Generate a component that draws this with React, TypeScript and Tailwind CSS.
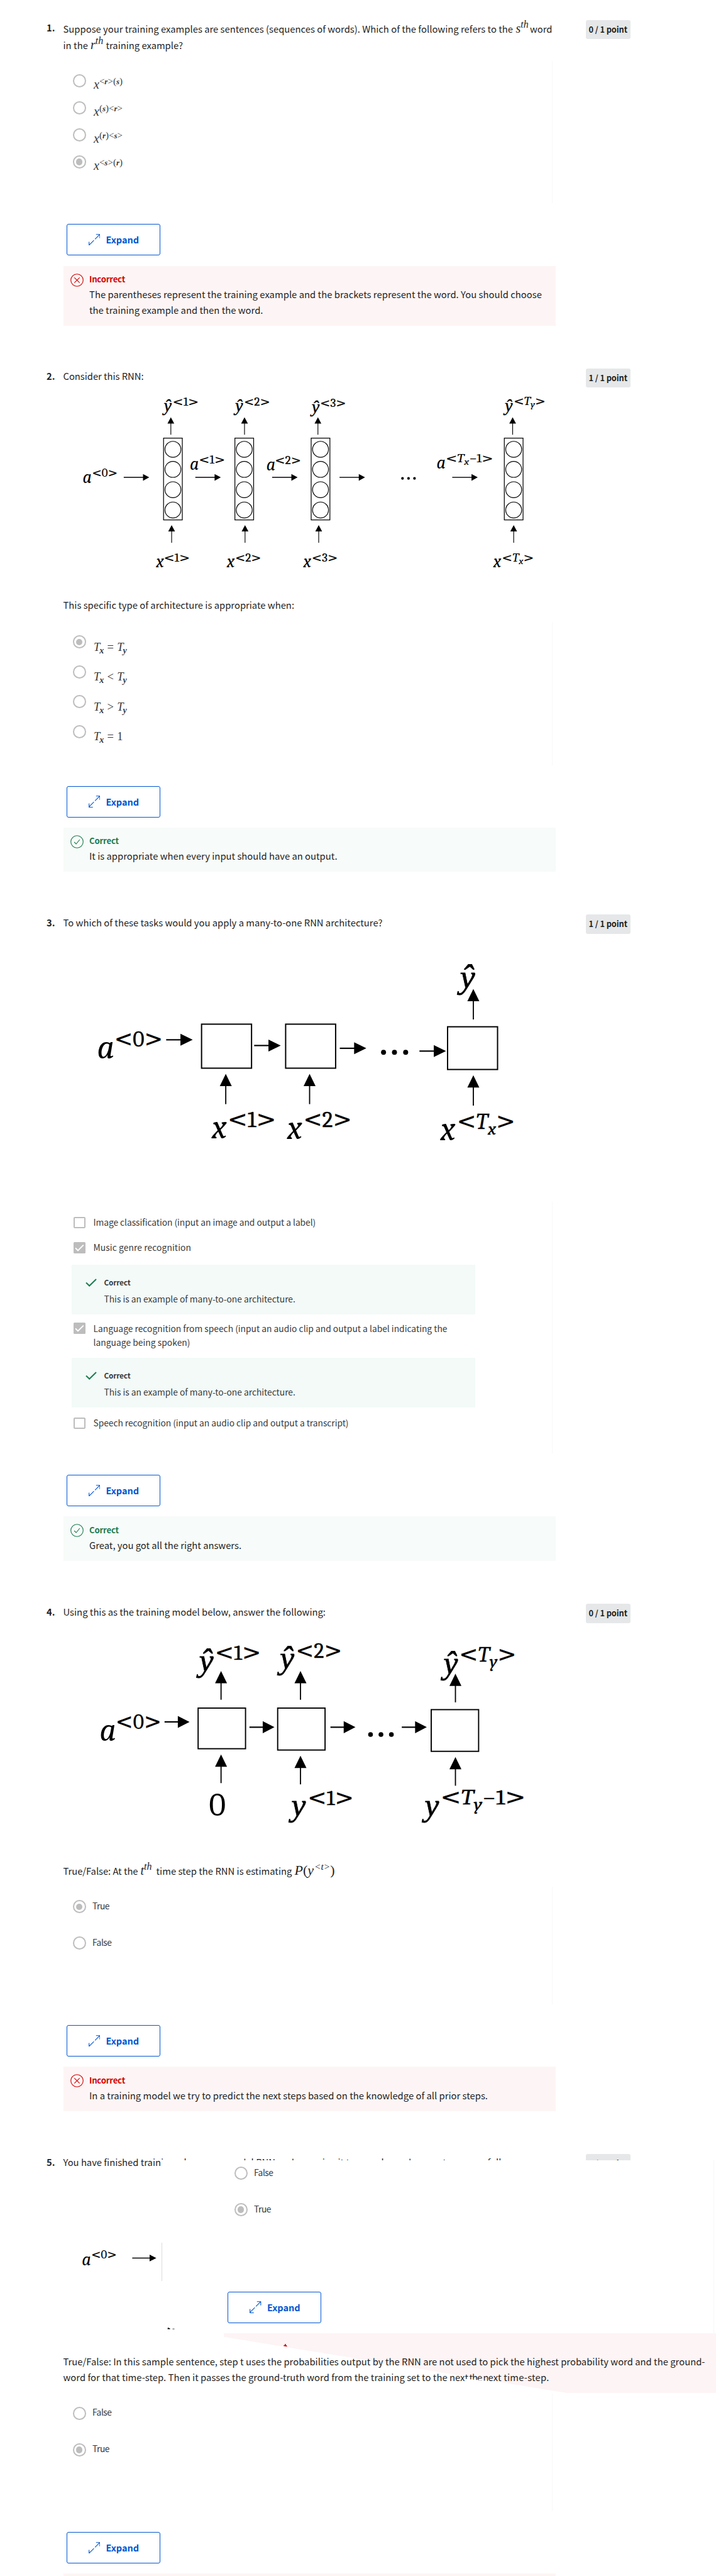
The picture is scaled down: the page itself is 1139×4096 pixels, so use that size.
import { useLayoutEffect, useRef } from "react";
import type { ReactNode } from "react";

/** One line of text whose letter spacing is adjusted so that it fills a measure. */
function Line({ w, className = "", children }: { w: number; className?: string; children: string }) {
  const ref = useRef<HTMLSpanElement>(null);
  useLayoutEffect(() => {
    const el = ref.current;
    if (!el) return;
    el.style.letterSpacing = "0px";
    const natural = el.getBoundingClientRect().width;
    el.style.letterSpacing = `${(w - natural) / children.length}px`;
  }, [w, children]);
  return (
    <span ref={ref} className={"inline-block whitespace-pre " + className}>
      {children}
    </span>
  );
}

const SERIF = "font-['Liberation_Serif',serif]";

/* ---------- controls ---------- */

function Radio({ on = false }: { on?: boolean }) {
  return (
    <span className="flex size-[21px] shrink-0 items-center justify-center rounded-full border-2 border-[#bdbdbd]">
      {on && <span className="size-[10.5px] rounded-full bg-[#bdbdbd]" />}
    </span>
  );
}

function Checkbox({ on = false }: { on?: boolean }) {
  return on ? (
    <svg viewBox="0 0 19 18" className="mt-[2.5px] h-[18px] w-[19px] shrink-0">
      <rect width="19" height="18" rx="1.5" fill="#bdbdbd" />
      <path d="M3 9.4 7 13.4 15.8 4.6" fill="none" stroke="#fff" strokeWidth="2" />
    </svg>
  ) : (
    <span className="mt-[2.5px] h-[18px] w-[19px] shrink-0 rounded-[2px] border-2 border-[#bdbdbd]" />
  );
}

function Expand({ className = "" }: { className?: string }) {
  return (
    <button
      className={
        "flex h-[50px] w-[149px] shrink-0 items-center rounded-[3px] border border-[#0056d2] bg-white pl-[34px] text-[#0056d2] " +
        className
      }
    >
      <svg viewBox="0 0 22 22" className="size-[18.5px]" fill="none" stroke="#0056d2" strokeWidth="1.3">
        <path d="M14 .8h7.2V8M21 1 12 10M8 22H.8v-7.2M1 21l9-9" />
      </svg>
      <Line w={52.5} className="ml-[9.5px] text-[14.5px] font-bold">
        Expand
      </Line>
    </button>
  );
}

function Feedback({
  ok,
  className,
  children,
}: {
  ok: boolean;
  className: string;
  children: ReactNode;
}) {
  return (
    <div className={"flex w-[783px] shrink-0 pl-[11.5px] " + (ok ? "bg-[#f7fbf9] " : "bg-[#fdf5f5] ") + className}>
      <svg
        viewBox="0 0 24 24"
        className="mt-[12px] size-[21px] shrink-0"
        fill="none"
        stroke={ok ? "#1d7c50" : "#d30001"}
        strokeWidth="1.3"
      >
        <circle cx="12" cy="12" r="11.2" />
        <path d={ok ? "M7 12.6 10.4 16 17 8" : "M7.2 7.2 16.8 16.8M16.8 7.2 7.2 16.8"} />
      </svg>
      <div className="ml-[9px] flex flex-col items-start pt-[10.5px] text-[14.8px] leading-[25px] text-[#1f1f1f]">
        <Line
          w={ok ? 47 : 57}
          className={"text-[13.2px] leading-[22px] font-bold " + (ok ? "text-[#1d7c50]" : "text-[#d30001]")}
        >
          {ok ? "Correct" : "Incorrect"}
        </Line>
        {children}
      </div>
    </div>
  );
}

function Question({
  n,
  points,
  className,
  children,
}: {
  n: number;
  points: string;
  className: string;
  children: ReactNode;
}) {
  return (
    <section className={"flex shrink-0 items-start pl-[74px] " + className}>
      <div className="w-[26.5px] shrink-0 text-[14.8px] leading-[25.5px] font-bold text-[#1f1f1f]">{n}.</div>
      <div className="flex w-[783px] shrink-0 flex-col items-start text-[14.8px] leading-[25.5px] text-[#1f1f1f]">
        {children}
      </div>
      <div className="mt-[0.5px] ml-[48.5px] flex h-[30.5px] w-[70.5px] shrink-0 items-center justify-center rounded-[3px] bg-[#e5e7e8] text-[12.8px] leading-[20px] font-bold text-[#1f1f1f]">
        <Line w={61.5}>{points}</Line>
      </div>
    </section>
  );
}

function Panel({ className, children }: { className: string; children: ReactNode }) {
  return (
    <div className={"flex w-[778px] shrink-0 flex-col border-r border-[#f7f7f7] pl-[15px] text-[#373a3c] " + className}>
      {children}
    </div>
  );
}

function TrueFalse({ value, on }: { value: "True" | "False"; on?: boolean }) {
  return (
    <div className="flex h-[58px] items-center">
      <Radio on={on} />
      <Line w={value === "True" ? 27 : 30.5} className="-mt-[3px] ml-[10.5px] text-[13.8px]">
        {value}
      </Line>
    </div>
  );
}

/* ---------- inline maths ---------- */

function PowerTh({ base, className }: { base: string; className: string }) {
  return (
    <span className={"inline-block leading-none whitespace-nowrap italic " + SERIF + " " + className}>
      <span className="text-[20px]">{base}</span>
      <span className="inline-block align-[8px] text-[16px] leading-none">th</span>
    </span>
  );
}

function WordOption({ parts, on }: { parts: string; on?: boolean }) {
  return (
    <div className="flex h-[43px] items-center">
      <Radio on={on} />
      <span className={"mt-[10px] ml-[12.5px] leading-[18px] " + SERIF}>
        <span className="text-[20px] italic">x</span>
        <span className="inline-block align-[7px] leading-none">
          {parts.split("").map((c, i) => (
            <span key={i} className={/[rs]/.test(c) ? "text-[13px] font-bold italic" : "text-[15px]"}>
              {c}
            </span>
          ))}
        </span>
      </span>
    </div>
  );
}

function LengthOption({ rel, right, on }: { rel: string; right: ReactNode; on?: boolean }) {
  return (
    <div className="flex h-[47.5px] items-center">
      <Radio on={on} />
      <span className={"mt-[18px] ml-[12.5px] flex items-baseline text-[18.5px] leading-[18px] " + SERIF}>
        <Var sub="x" />
        <span className="mx-[4px] w-[13px] text-center">{rel}</span>
        {right}
      </span>
    </div>
  );
}

function Var({ sub }: { sub: string }) {
  return (
    <span className="italic">
      T<span className="relative top-[4px] -ml-px text-[14px] font-bold">{sub}</span>
    </span>
  );
}

/* ---------- network diagrams (viewBox units) ---------- */

function Up({ x, tip, tail, hw = 11.5, hh = 23.5, sw = 2.2 }: { x: number; tip: number; tail: number; hw?: number; hh?: number; sw?: number }) {
  return (
    <g>
      <path d={`M${x} ${tail}V${tip + hh - 1}`} stroke="#000" strokeWidth={sw} />
      <path d={`M${x} ${tip}l${hw} ${hh}h${-2 * hw}z`} />
    </g>
  );
}

function Right({ x, y, w, hw = 11.5, hl = 23.5, sw = 2.6 }: { x: number; y: number; w: number; hw?: number; hl?: number; sw?: number }) {
  return (
    <g>
      <path d={`M${x} ${y}h${w - hl + 1}`} stroke="#000" strokeWidth={sw} />
      <path d={`M${x + w} ${y}l${-hl} ${hw}v${-2 * hw}z`} />
    </g>
  );
}

function Dots({ xs, y, r }: { xs: number[]; y: number; r: number }) {
  return (
    <g>
      {xs.map((x) => (
        <circle key={x} cx={x} cy={y} r={r} />
      ))}
    </g>
  );
}

const SYMBOL = "Caladea, 'Liberation Serif', serif";

/** A letter with an angle-bracketed superscript such as a<0> or y<Ty-1>. */
function Label({
  x,
  y,
  base,
  fs,
  sx,
  sy,
  sw,
  idx,
  sub,
  rest = "",
}: {
  x: number;
  y: number;
  base: string;
  fs: number;
  sx?: number;
  sy?: number;
  sw?: number;
  idx?: string;
  sub?: string;
  rest?: string;
}) {
  const s = fs * 0.645;
  const tailed = base === "y" || base === "ŷ";
  return (
    <g stroke="#000">
      <text
        x={x}
        y={y}
        fontSize={fs}
        fontFamily={tailed ? "Liberation Serif" : SYMBOL}
        fontStyle={base === "0" ? "normal" : "italic"}
        strokeWidth={tailed ? fs * 0.016 : 0}
      >
        {base}
      </text>
      {sx !== undefined && sw !== undefined && (
        <text
          x={sx - s * 0.1}
          y={sy}
          fontSize={s}
          fontFamily={SYMBOL}
          strokeWidth={s * 0.01}
          textLength={sw + s * 0.2}
          lengthAdjust="spacingAndGlyphs"
        >
          <tspan fontFamily="DejaVu Sans">&lt;</tspan>
          <tspan fontStyle={sub ? "italic" : "normal"}>{idx}</tspan>
          {sub && (
            <tspan fontStyle="italic" fontSize={s * 0.8} dy={s * 0.26}>
              {sub}
            </tspan>
          )}
          {rest && <tspan dy={sub ? -s * 0.26 : 0}>{rest}</tspan>}
          <tspan fontFamily="DejaVu Sans" dy={sub && !rest ? -s * 0.26 : 0}>
            &gt;
          </tspan>
        </text>
      )}
    </g>
  );
}

function ManyToMany() {
  const f = 34;
  return (
    <svg viewBox="121.5 740 945 390" className="mt-[2.5px] h-[323px] w-[783px] shrink-0">
      {[313.5, 450.5, 597, 968].map((x) => (
        <g key={x} fill="none" stroke="#000">
          <rect x={x} y="841" width="36" height="157" strokeWidth="1.5" />
          {[862.5, 901, 940, 979].map((cy) => (
            <circle key={cy} cx={x + 18} cy={cy} r="15.3" strokeWidth="1.4" />
          ))}
        </g>
      ))}
      {[327.5, 469, 610, 984].map((x) => (
        <Up key={x} x={x} tip={801} tail={834.5} hw={6.5} hh={12} sw={1.4} />
      ))}
      {[329, 470, 611.5, 986].map((x) => (
        <Up key={x} x={x} tip={1008} tail={1042} hw={6.5} hh={12} sw={1.4} />
      ))}
      {[237, 374.5, 522, 651.5, 868].map((x) => (
        <Right key={x} x={x} y={916.3} w={49} hw={6.5} hl={12} sw={1.7} />
      ))}
      <Dots xs={[772.5, 784, 795.5]} y={918.3} r={2.6} />
      <Label x={314} y={790} base="ŷ" fs={f} sx={333} sy={779} sw={46} idx="1" />
      <Label x={451} y={790} base="ŷ" fs={f} sx={470} sy={779} sw={46} idx="2" />
      <Label x={598} y={792} base="ŷ" fs={f} sx={616} sy={781} sw={46} idx="3" />
      <Label x={969} y={790} base="ŷ" fs={f} sx={988} sy={777} sw={57} idx="T" sub="y" />
      <Label x={158} y={927} base="a" fs={f} sx={178} sy={915} sw={45} idx="0" />
      <Label x={364} y={901.5} base="a" fs={f} sx={383.5} sy={889.5} sw={46} idx="1" />
      <Label x={511} y={903} base="a" fs={f} sx={529.5} sy={891.5} sw={46} idx="2" />
      <Label x={838} y={899} base="a" fs={f} sx={857.5} sy={887} sw={87} idx="T" sub="x" rest="−1" />
      <Label x={299} y={1089.5} base="x" fs={f} sx={316} sy={1077.5} sw={46} idx="1" />
      <Label x={435} y={1089.5} base="x" fs={f} sx={453} sy={1077.5} sw={46} idx="2" />
      <Label x={582} y={1089.5} base="x" fs={f} sx={600} sy={1077.5} sw={46} idx="3" />
      <Label x={947} y={1089.5} base="x" fs={f} sx={965.5} sy={1077.5} sw={57} idx="T" sub="x" />
    </svg>
  );
}

function ManyToOne() {
  const f = 65;
  return (
    <svg viewBox="121.5 1800 945 460" className="mt-[12px] h-[381px] w-[783px] shrink-0">
      <g fill="none" stroke="#000" strokeWidth="2.4">
        <rect x="386.5" y="1966" width="96" height="84.5" />
        <rect x="548" y="1966" width="96" height="84.5" />
        <rect x="859" y="1971" width="96" height="82" />
      </g>
      <Right x={318.5} y={1996} w={51} />
      <Right x={487.5} y={2007} w={51} />
      <Right x={652} y={2012.3} w={51} />
      <Right x={805} y={2017.7} w={51} />
      <Dots xs={[736, 757, 778.5]} y={2020} r={4.8} />
      <Up x={433} tip={2061.5} tail={2119.5} />
      <Up x={594} tip={2061.5} tail={2119.5} />
      <Up x={908.5} tip={2064} tail={2122.5} />
      <Up x={908.5} tip={1898.5} tail={1957} />
      <Label x={883} y={1897} base="ŷ" fs={f} />
      <Label x={186} y={2032} base="a" fs={f} sx={223} sy={2008.5} sw={85} idx="0" />
      <Label x={406} y={2185} base="x" fs={f} sx={440.5} sy={2163} sw={85} idx="1" />
      <Label x={551} y={2186.5} base="x" fs={f} sx={586} sy={2164} sw={85} idx="2" />
      <Label x={845} y={2188.5} base="x" fs={f} sx={881} sy={2167} sw={104} idx="T" sub="x" />
    </svg>
  );
}

function TrainingModel() {
  const f = 62;
  return (
    <svg viewBox="121.5 3120 945 400" className="mt-[9.5px] h-[331.5px] w-[783px] shrink-0">
      <g fill="none" stroke="#000" strokeWidth="2.3">
        <rect x="380" y="3278" width="91" height="78" />
        <rect x="532.7" y="3278" width="91" height="80.5" />
        <rect x="827.5" y="3281" width="91" height="80" />
      </g>
      <Right x={315.5} y={3304.5} w={48} hl={22.5} />
      <Right x={478.5} y={3314.7} w={48} hl={22.5} />
      <Right x={634} y={3314.7} w={48} hl={22.5} />
      <Right x={771} y={3314.7} w={48} hl={22.5} />
      <Dots xs={[711, 731, 751]} y={3328.7} r={4.6} />
      <Up x={424} tip={3207} tail={3262} />
      <Up x={576.5} tip={3207} tail={3262} />
      <Up x={874} tip={3212} tail={3267} />
      <Up x={424} tip={3367} tail={3422} />
      <Up x={576.5} tip={3369.5} tail={3424.5} />
      <Up x={874} tip={3372} tail={3427} />
      <Label x={382} y={3206.5} base="ŷ" fs={f} sx={416} sy={3185.5} sw={81} idx="1" />
      <Label x={537} y={3202.5} base="ŷ" fs={f} sx={571.5} sy={3181.5} sw={81} idx="2" />
      <Label x={851} y={3211.5} base="ŷ" fs={f} sx={885} sy={3189} sw={102} idx="T" sub="y" />
      <Label x={191} y={3340.5} base="a" fs={f} sx={225.5} sy={3318} sw={80} idx="0" />
      <Label x={401} y={3485} base="0" fs={f} />
      <Label x={559} y={3485} base="y" fs={f} sx={594} sy={3464} sw={81} idx="1" />
      <Label x={815} y={3485} base="y" fs={f} sx={849} sy={3463} sw={156} idx="T" sub="y" rest="−1" />
    </svg>
  );
}

/* ---------- checkbox answers ---------- */

function Choice({ on, className, children }: { on?: boolean; className: string; children: ReactNode }) {
  return (
    <div className={"flex items-start pl-px text-[13.8px] leading-[22.3px] " + className}>
      <Checkbox on={on} />
      <div className="ml-[13px] flex flex-col items-start">{children}</div>
    </div>
  );
}

function ChoiceNote({ className }: { className: string }) {
  return (
    <div className={"-ml-[2px] flex h-[79.5px] w-[642px] shrink-0 items-start bg-[#f3faf8] pl-[22px] " + className}>
      <svg viewBox="0 0 18 13" className="mt-[22px] h-[13px] w-[18px] shrink-0" fill="none" stroke="#1d7c50" strokeWidth="2">
        <path d="M1 6.5 6.2 11.5 17 1" />
      </svg>
      <div className="ml-[12px] flex flex-col items-start pt-[17px]">
        <Line w={42} className="text-[11.8px] leading-[22px] font-bold">
          Correct
        </Line>
        <Line w={304.3} className="mt-[4px] text-[13.8px] leading-[22px]">
          This is an example of many-to-one architecture.
        </Line>
      </div>
    </div>
  );
}

/* ---------- pieces lying over the last question ---------- */

function Overlay() {
  return (
    <>
      <div className="absolute top-[3434.5px] left-[257px] h-[275px] w-[878.5px] border-r border-[#f7f7f7] bg-white text-[#373a3c]">
        <div className="flex flex-col items-start">
          <div className="-mt-[8px] pl-[115.5px]">
            <TrueFalse value="False" />
            <TrueFalse value="True" on />
          </div>
          <Expand className="mt-[101px] ml-[105px]" />
        </div>
      </div>
      <div className="absolute top-[3565.5px] left-[257px] h-[61px] w-px bg-[#dcdcdc]" />
      <svg viewBox="0 0 13 4" className="absolute top-[3700.5px] left-[265.5px] h-[4px] w-[13px]">
        <path d="M1 0 4.5 1.2V2.6H.5zM8.5 1.8h3v.8h-3z" />
      </svg>
      <div className="absolute top-[3709.5px] left-[356px] h-[95.5px] w-[783px] bg-[#fdf4f5] [clip-path:polygon(0_0,100%_0,100%_100%,69.7%_100%,0_6.5%)]" />
      <svg viewBox="0 0 6 5" className="absolute top-[3727px] left-[450.5px] h-[5px] w-[6px]" fill="#d30001">
        <path d="M2.2 0h1.5v1.5L5.5 3v1.2L0 3.2V2.4L2.2 1.6z" />
      </svg>
    </>
  );
}

export default function App() {
  return (
    <main className="relative flex h-[4096px] w-[1139px] flex-col overflow-hidden bg-white pt-[31px] font-['Noto_Sans_CJK_SC','Noto_Sans',sans-serif]">
      <Question n={1} points="0 / 1 point" className="h-[554px]">
        <div className="flex h-[25.5px] items-baseline">
          <Line w={715.5}>
            Suppose your training examples are sentences (sequences of words). Which of the following refers to the
          </Line>
          <PowerTh base="s" className="ml-[4.5px] w-[22.5px]" />
          <Line w={35.5}>word</Line>
        </div>
        <div className="flex h-[25.5px] items-baseline">
          <Line w={39.5}>in the</Line>
          <PowerTh base="r" className="ml-[4px] w-[24.5px]" />
          <Line w={122.5}>training example?</Line>
        </div>
        <Panel className="mt-[15px] h-[226px] pt-[10px]">
          <WordOption parts="<r>(s)" />
          <WordOption parts="(s)<r>" />
          <WordOption parts="(r)<s>" />
          <WordOption parts="<s>(r)" on />
        </Panel>
        <Expand className="mt-[33px] ml-[5px]" />
        <Feedback ok={false} className="mt-[16.5px] h-[95px]">
          <Line w={720}>
            The parentheses represent the training example and the brackets represent the word. You should choose
          </Line>
          <Line w={276.5}>the training example and then the word.</Line>
        </Feedback>
      </Question>

      <Question n={2} points="1 / 1 point" className="h-[868.5px]">
        <Line w={128}>Consider this RNN:</Line>
        <ManyToMany />
        <Line w={367.5} className="mt-[13px]">
          This specific type of architecture is appropriate when:
        </Line>
        <Panel className="mt-[14px] h-[228px] pt-[8.5px]">
          <LengthOption rel="=" right={<Var sub="y" />} on />
          <LengthOption rel="<" right={<Var sub="y" />} />
          <LengthOption rel=">" right={<Var sub="y" />} />
          <LengthOption rel="=" right="1" />
        </Panel>
        <Expand className="mt-[33px] ml-[5px]" />
        <Feedback ok className="mt-[16px] h-[70px]">
          <Line w={394.5}>It is appropriate when every input should have an output.</Line>
        </Feedback>
      </Question>

      <Question n={3} points="1 / 1 point" className="h-[1096px]">
        <Line w={508}>To which of these tasks would you apply a many-to-one RNN architecture?</Line>
        <ManyToOne />
        <Panel className="mt-[39px] h-[400px] pt-[21px]">
          <Choice className="h-[22px]">
            <Line w={353.7}>Image classification (input an image and output a label)</Line>
          </Choice>
          <Choice on className="mt-[18px] h-[22px]">
            <Line w={155.5}>Music genre recognition</Line>
          </Choice>
          <ChoiceNote className="mt-[16.5px]" />
          <Choice on className="mt-[10.5px]">
            <Line w={563}>Language recognition from speech (input an audio clip and output a label indicating the</Line>
            <Line w={154}>language being spoken)</Line>
          </Choice>
          <ChoiceNote className="mt-[13.5px]" />
          <Choice className="mt-[13px] h-[22px]">
            <Line w={406}>Speech recognition (input an audio clip and output a transcript)</Line>
          </Choice>
        </Panel>
        <Expand className="mt-[34px] ml-[5px]" />
        <Feedback ok className="mt-[16px] h-[71px]">
          <Line w={242}>Great, you got all the right answers.</Line>
        </Feedback>
      </Question>

      <Question n={4} points="0 / 1 point" className="h-[875px]">
        <Line w={417.5}>Using this as the training model below, answer the following:</Line>
        <TrainingModel />
        <div className="mt-[44px] flex h-[25.5px] items-baseline">
          <Line w={119}>True/False: At the</Line>
          <PowerTh base="t" className="ml-[4px] w-[25px]" />
          <Line w={216}>time step the RNN is estimating</Line>
          <span className={"ml-[4px] text-[22px] leading-none whitespace-nowrap italic " + SERIF}>
            P<span className="not-italic">(</span>y
            <span className="ml-px inline-block align-[8px] text-[15.5px] leading-none">&lt;t&gt;</span>
            <span className="not-italic">)</span>
          </span>
        </div>
        <Panel className="mt-[14px] h-[187px] pt-[3.4px]">
          <TrueFalse value="True" on />
          <TrueFalse value="False" />
        </Panel>
        <Expand className="mt-[33.5px] ml-[5px]" />
        <Feedback ok={false} className="mt-[16px] h-[70.5px]">
          <Line w={634}>In a training model we try to predict the next steps based on the knowledge of all prior steps.</Line>
        </Feedback>
      </Question>

      <Question n={5} points="0 / 1 point" className="">
        <div className="flex">
          <Line w={155.5}>You have finished train</Line>
          <Line w={541.5}>ing a language model RNN and are using it to sample random sentences, as foll</Line>
          <Line w={34}>ows:</Line>
        </div>
        <svg viewBox="121.5 4300 945 80" className="mt-[112px] h-[66px] w-[783px] shrink-0">
          <Label x={155} y={4348} base="a" fs={34.5} sx={175} sy={4335.5} sw={45} idx="0" />
          <Right x={252} y={4334.5} w={46.5} hw={6.5} hl={13} sw={1.8} />
        </svg>
        <div className="relative z-10 mt-[114px] h-[50px] leading-[25px]">
          <Line w={1021}>
            True/False: In this sample sentence, step t uses the probabilities output by the RNN are not used to pick the highest probability word and the ground-
          </Line>
          <div className="flex">
            <Line w={639}>
              word for that time-step. Then it passes the ground-truth word from the training set to the nex
            </Line>
            <Line w={37} className="[clip-path:polygon(0_0,100%_0,100%_76%,0_62%)]">
              t the n
            </Line>
            <Line w={97}>ext time-step.</Line>
          </div>
        </div>
        <Panel className="mt-[14px] h-[186.5px] pt-[2.5px]">
          <TrueFalse value="False" />
          <TrueFalse value="True" on />
        </Panel>
        <Expand className="mt-[33.5px] ml-[5px]" />
        <div className="mt-[16px] h-[4px] w-[783px] bg-[#fdf5f5]" />
      </Question>

      <Overlay />
    </main>
  );
}
